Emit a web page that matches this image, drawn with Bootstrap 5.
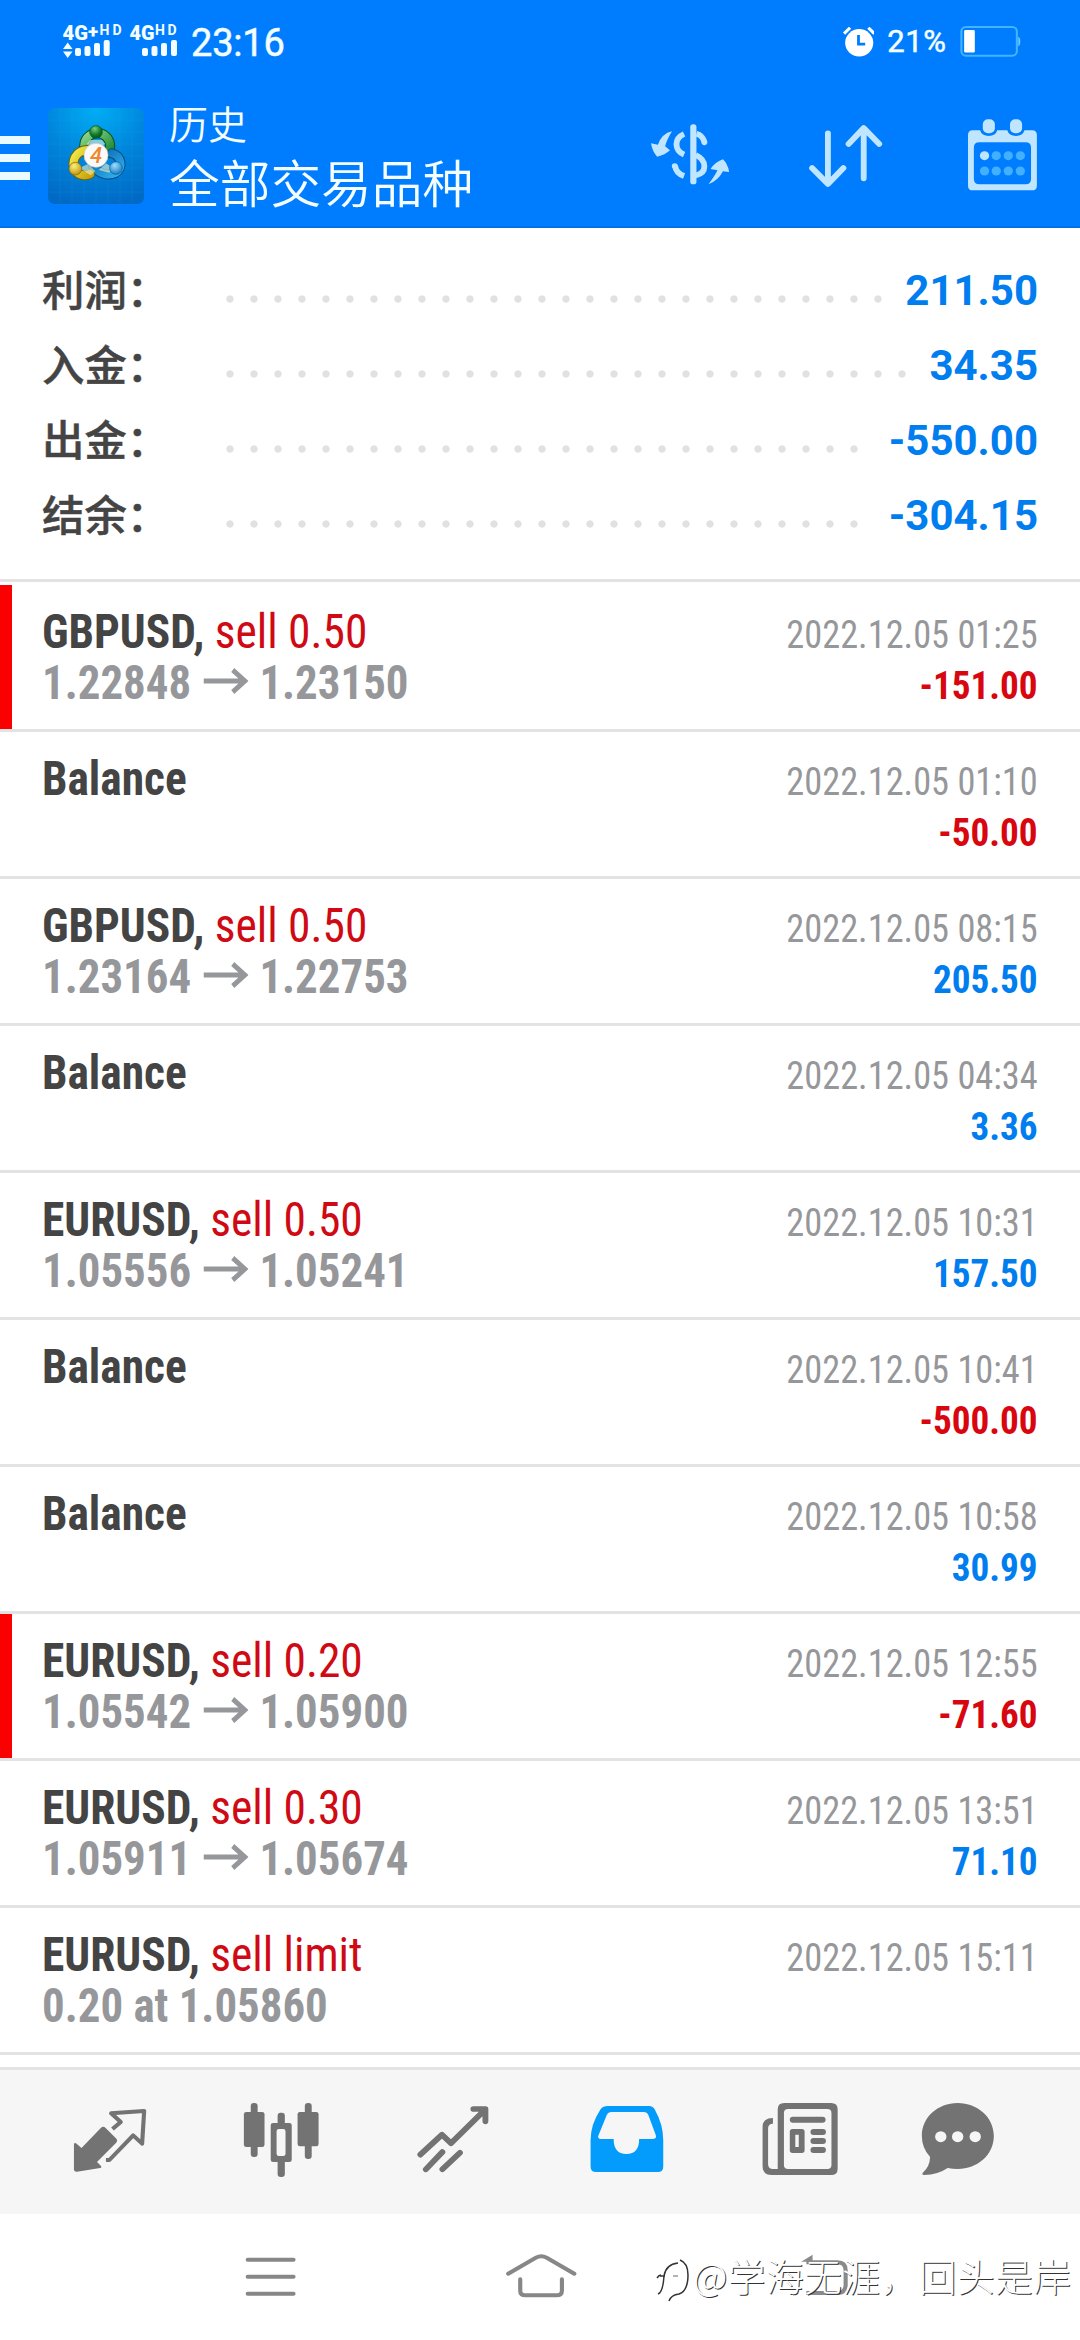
<!DOCTYPE html>
<html lang="zh-CN">
<head>
<meta charset="utf-8">
<meta name="viewport" content="width=device-width, initial-scale=1">
<title>历史</title>
<link href="https://cdn.jsdelivr.net/npm/bootstrap@5.3.0/dist/css/bootstrap.min.css" rel="stylesheet">
<style>
body{width:1080px;height:2340px;overflow:hidden;background:#fff;font-family:Roboto,"Noto Sans CJK SC",sans-serif;color:#444;position:relative}
svg{display:block;flex:none}
.topbar{height:228px;background:#007dff;border-bottom:2px solid #0070e4;color:#f4fdff}
.statusrow{height:84px;padding:0 59.2px 0 60px}
.clock{font-size:38px;line-height:42px;font-weight:400;margin:1px 0 0 10px;letter-spacing:-.2px;-webkit-text-stroke:.5px #f4fdff}
.battpct{width:85.8px;font-size:31px;line-height:36px;font-weight:400;letter-spacing:.6px;-webkit-text-stroke:.5px #f4fdff}
.approw{height:142px}
.app-burger{margin-top:48px}
.app-logo{margin:24px 0 0 18px}
.app-heading{margin:14px 0 0 25px}
.tool-a{margin:32.7px 79.9px 0 0}
.tool-b{margin:32.7px 85.4px 0 0}
.tool-c{margin:32.7px 43.1px 0 0}
.screen-name{font-family:"Noto Sans CJK SC",sans-serif;font-size:39px;line-height:48px;font-weight:350}
.filter-name{font-family:"Noto Sans CJK SC",sans-serif;font-size:50.7px;line-height:70px;font-weight:350}
.summary{height:354px;border-bottom:3px solid #e3e3e3;padding:25px 42px 0;margin-bottom:3px}
.sumrow{height:75px}
.sumlabel{width:184px;font-family:"Noto Sans CJK SC",sans-serif;font-size:42.4px;line-height:69px;height:75px;font-weight:500;-webkit-text-stroke:.5px #444}
.leader{height:8px;background:radial-gradient(circle at 4px 4px,#e1e1e1 3.3px,transparent 4px) 0 0/24px 8px repeat-x;margin-top:17px;width:calc(var(--n)*24px)}
.sumval{font-size:42px;line-height:77px;font-weight:700;color:#007dee}
.deal{height:147px;border-bottom:3px solid #e3e3e3;padding:0 42px;position:relative}
.deal.flag::before{content:"";position:absolute;left:0;top:0;width:12px;height:144px;background:#fa0000}
.lhs{padding-top:21px}
.rhs{padding-top:25px}
.cond{font-family:"Roboto Condensed",Roboto,sans-serif;white-space:nowrap}
.lhs .cond{font-size:48px;line-height:51px;font-weight:700;transform:scaleX(.946);transform-origin:0 0}
.side{color:#cf0a14;font-weight:400}
.lhs .price{color:#96979a;transform:scaleX(.935)}
.rhs .cond{font-size:39px;line-height:51px;transform:scaleX(.932);transform-origin:100% 0}
.when{color:#96979a}
.rhs .amount{font-weight:700;color:#d8060f;transform:scaleX(.953)}
.rhs .amount.up{color:#007dee}
.tabs{height:147px;margin-top:12px;border-top:3px solid #e3e3e3;background:#f6f6f6;padding:30px 0 0 24.1px}
.sysnav{height:126px;padding:39.3px 0 0 236.2px}
.nav-menu{margin-right:197.7px}
.nav-home{margin-right:216.9px}
.stamp{position:absolute;left:652px;top:2245px;color:#fff;font-family:"Noto Sans CJK SC",sans-serif;font-weight:300;font-size:37.7px;line-height:60px;letter-spacing:.5px;text-shadow:1px 1px 0 #333;white-space:nowrap}
</style>
</head>
<body>
<header class="topbar">
  <div class="statusrow d-flex align-items-center justify-content-between">
    <div class="d-flex align-items-center">
      <svg width="121" height="64" viewBox="60 10 121 64" fill="#f4fdff" font-family="Roboto,sans-serif" font-weight="900">
        <text x="62.500" y="39.500" font-size="19.500" textLength="25.500" lengthAdjust="spacingAndGlyphs">4G</text><text x="88" y="38" font-size="19">+</text><text x="99.500" y="35" font-size="14" textLength="22" font-weight="700">HD</text>
        <path d="M63 49l4.700-6.500L72.500 49zM63 51.500h9.500L67.700 58z"/>
        <g><rect x="75" y="48" width="6" height="8" rx="2"/><rect x="84.500" y="46" width="6" height="10" rx="2"/><rect x="94" y="43" width="6" height="13" rx="2"/><rect x="103.700" y="40" width="6" height="16" rx="2"/></g>
        <text x="129.500" y="39.500" font-size="19.500" textLength="25" lengthAdjust="spacingAndGlyphs">4G</text><text x="155" y="35" font-size="14" textLength="21.500" font-weight="700">HD</text>
        <g><rect x="142" y="48" width="6" height="8" rx="2"/><rect x="151.500" y="46" width="6" height="10" rx="2"/><rect x="161" y="43" width="6" height="13" rx="2"/><rect x="171" y="40" width="6" height="16" rx="2"/></g>
      </svg>
      <div class="clock">23:16</div>
    </div>
    <div class="d-flex align-items-center">
      <svg width="31" height="32" viewBox="878 82 88 93" preserveAspectRatio="none"><ellipse cx="924" cy="131" rx="40" ry="40" fill="#fff"/><path d="M881 104l17-17M967 104l-17-17" stroke="#fff" stroke-width="9"/><path d="M922 108v27h19" fill="none" stroke="#007dff" stroke-width="8"/></svg>
      <div class="battpct text-center">21%</div>
      <svg width="61" height="32" viewBox="1219 80 177 95" preserveAspectRatio="none"><rect x="1223" y="83" width="161" height="85" rx="13" fill="none" stroke="#43b4ff" stroke-width="6"/><rect x="1231" y="92" width="31" height="67" rx="4" fill="#fff"/><path d="M1388 112q6 2 6 14t-6 14z" fill="#6cc6ff"/></svg>
    </div>
  </div>
  <div class="approw d-flex align-items-start">
    <svg class="app-burger" width="30" height="52" viewBox="0 0 30 52" fill="#e9fbff"><path d="M0 4h30v8H0zM0 22h30v8H0zM0 40h30v8H0z"/></svg>
    <svg class="app-logo" width="96" height="96" viewBox="24 24 288 288">
      <defs>
        <radialGradient id="tile" cx=".5" cy="0" r="1.050"><stop offset="0" stop-color="#00aef6"/><stop offset=".5" stop-color="#0086dc"/><stop offset="1" stop-color="#0069c4"/></radialGradient>
        <linearGradient id="gr" x1="0" y1="0" x2="1" y2="1"><stop offset="0" stop-color="#8ed88c"/><stop offset="1" stop-color="#17852f"/></linearGradient>
        <linearGradient id="ye" x1="0" y1="0" x2="1" y2="1"><stop offset="0" stop-color="#f3ea4a"/><stop offset="1" stop-color="#c9a50c"/></linearGradient>
        <linearGradient id="bl" x1="0" y1="0" x2="1" y2="1"><stop offset="0" stop-color="#0a63ab"/><stop offset="1" stop-color="#2fb2ee"/></linearGradient>
        <radialGradient id="gb" cx=".4" cy=".25" r=".8"><stop offset="0" stop-color="#7ccf7c"/><stop offset=".6" stop-color="#0f7a2a"/><stop offset="1" stop-color="#064d18"/></radialGradient>
        <radialGradient id="yb" cx=".4" cy=".3" r=".8"><stop offset="0" stop-color="#fff07a"/><stop offset="1" stop-color="#b68a06"/></radialGradient>
        <radialGradient id="bb" cx=".4" cy=".3" r=".8"><stop offset="0" stop-color="#9be0ff"/><stop offset="1" stop-color="#0d6fb8"/></radialGradient>
      </defs>
      <rect x="24" y="24" width="288" height="288" rx="20" fill="url(#tile)"/>
      <path d="M60 24v288M96 24v288M132 24v288M168 24v288M204 24v288M240 24v288M276 24v288M24 60h288M24 96h288M24 132h288M24 168h288M24 204h288M24 240h288M24 276h288" stroke="#3bb6f5" stroke-opacity=".16" stroke-width="2"/>
      <g fill="none" stroke-linecap="round">
        <path d="M138 158a39 39 0 1 1 66 2" stroke="#07501f" stroke-width="30"/><path d="M138 158a39 39 0 1 1 66 2" stroke="url(#gr)" stroke-width="24"/>
        <path d="M216 160C246 168 250 205 226 219C200 232 170 216 158 196" stroke="#084a86" stroke-width="30"/><path d="M216 160C246 168 250 205 226 219C200 232 170 216 158 196" stroke="url(#bl)" stroke-width="24"/>
        <path d="M142 150C106 152 92 185 106 212C118 228 140 228 150 222" stroke="#6d6409" stroke-width="30"/><path d="M142 150C106 152 92 185 106 212C118 228 140 228 150 222" stroke="url(#ye)" stroke-width="24"/>
      </g>
      <path d="M140 132l10-12h36l10 12-28 14zM118 204l26-12 22 22-14 12zM176 210l22-20 18 12-8 16z" fill="#e2f4d5" opacity=".6"/>
      <circle cx="168" cy="96" r="19" fill="url(#gb)" stroke="#06501b" stroke-width="2"/><circle cx="106" cy="206" r="19" fill="url(#yb)" stroke="#806407" stroke-width="2"/><circle cx="228" cy="204" r="19" fill="url(#bb)" stroke="#0a5a9c" stroke-width="2"/>
      <circle cx="168" cy="166" r="36" fill="#fafafa" stroke="#c9c9b8" stroke-width="2"/>
      <text x="168" y="188" text-anchor="middle" font-family="Roboto,sans-serif" font-style="italic" font-weight="500" font-size="66" fill="#f0862e">4</text>
    </svg>
    <div class="app-heading flex-grow-1">
      <div class="screen-name">历史</div>
      <div class="filter-name">全部交易品种</div>
    </div>
    <svg class="tool-a" width="78.500" height="76.700" viewBox="322 350 228 230" preserveAspectRatio="none" fill="#c0e6ff">
      <path d="M383 393q-15 25-20 45l14 12q-14 14-37 19-14-15-18-40l20 4q12-34 41-40z"/>
      <path d="M489 552q20-28 26-42l-20-4q12-20 36-29 14 14 18 38l-18-2q-14 28-42 39z"/>
      <rect x="436" y="372" width="18" height="180" rx="8"/>
      <g fill="none" stroke="#c0e6ff" stroke-width="17"><path d="M418 401q-22 10-22 31t22 31M392 496q2 22 26 31"/><path d="M454 400q17 4 23 24" /><path d="M452 464q25 12 25 34t-25 27"/></g>
      <circle cx="391" cy="497" r="8.500"/><circle cx="477" cy="426" r="8.500"/>
    </svg>
    <svg class="tool-b" width="73.300" height="76.700" viewBox="782 350 213 230" preserveAspectRatio="none" fill="none" stroke="#c0e6ff" stroke-width="17" stroke-linecap="round" stroke-linejoin="round"><path d="M837 399v150M791 503l46 48 45-48M941 534V384M897 431l44-48 45 48"/></svg>
    <svg class="tool-c" width="68.900" height="76.700" viewBox="1243 350 200 230" preserveAspectRatio="none">
      <path fill="#c0e6ff" fill-rule="evenodd" d="M1257 390h21q5 17 25 17t25-17h29q5 17 25 17t25-17h22q14 0 14 14v152q0 14-14 14h-172q-14 0-14-14V404q0-14 14-14zM1276 426q-16 0-16 16v94q0 16 16 16h134q16 0 16-16v-94q0-16-16-16z"/>
      <rect x="1286" y="357" width="35" height="42" rx="15" fill="#c0e6ff"/><rect x="1365" y="357" width="35" height="42" rx="15" fill="#c0e6ff"/>
      <g fill="#40b0ff"><circle cx="1291" cy="466" r="13.500" fill="#c0e6ff"/><circle cx="1325" cy="466" r="13.500"/><circle cx="1360" cy="466" r="13.500"/><circle cx="1395" cy="466" r="13.500"/><circle cx="1291" cy="512" r="13.500"/><circle cx="1325" cy="512" r="13.500"/><circle cx="1360" cy="512" r="13.500"/><circle cx="1395" cy="512" r="13.500"/></g>
    </svg>
  </div>
</header>

<section class="summary">
  <div class="sumrow d-flex align-items-center"><div class="sumlabel">利润：</div><div class="leader" style="--n:28"></div><div class="sumval ms-auto">211.50</div></div>
  <div class="sumrow d-flex align-items-center"><div class="sumlabel">入金：</div><div class="leader" style="--n:29"></div><div class="sumval ms-auto">34.35</div></div>
  <div class="sumrow d-flex align-items-center"><div class="sumlabel">出金：</div><div class="leader" style="--n:27"></div><div class="sumval ms-auto">-550.00</div></div>
  <div class="sumrow d-flex align-items-center"><div class="sumlabel">结余：</div><div class="leader" style="--n:27"></div><div class="sumval ms-auto">-304.15</div></div>
</section>

<main id="deals"></main>

<nav class="tabs d-flex">
  <svg width="172.180" height="80" viewBox="70 180 500 240" preserveAspectRatio="none" fill="#737373"><path d="M215 314q0-8 6-4l16 14 56-60q7-7 14 0l30 31q7 7 0 14l-55 57 11 11q4 5-2 7l-67 11q-9 1-9-8z"/><path d="M327 267l24-21-28-26 96-7-6 98-26-25-69 74-10 0" fill="none" stroke="#737373" stroke-width="12" stroke-linejoin="round"/></svg>
  <svg width="172.180" height="80" viewBox="570 180 500 240" preserveAspectRatio="none" fill="#737373"><rect x="709" y="216" width="60" height="105" rx="7"/><rect x="729" y="189" width="20" height="162" rx="9"/><rect x="865" y="216" width="61" height="103" rx="7"/><rect x="886" y="189" width="20" height="168" rx="9"/><rect x="807" y="218" width="21" height="40" rx="9"/><rect x="807" y="350" width="21" height="61" rx="9"/><path fill-rule="evenodd" d="M794 249h47q7 0 7 7v103q0 7-7 7h-47q-7 0-7-7V256q0-7 7-7zM811 267q-7 0-7 7v67q0 7 7 7h12q7 0 7-7v-67q0-7-7-7z"/></svg>
  <svg width="172.180" height="80" viewBox="1070 180 500 240" preserveAspectRatio="none" fill="none" stroke="#737373" stroke-width="17" stroke-linecap="round" stroke-linejoin="round"><path d="M1222 344l63-60 26 26 98-100M1376 207h35v37M1238 388l48-52M1286 388l51-50"/></svg>
  <svg width="172.180" height="80" viewBox="1570 180 500 240" preserveAspectRatio="none"><path fill="#039cfd" fill-rule="evenodd" d="M1764 198h120q10 0 16 10 25 46 25 92v80q0 16-16 16h-179q-16 0-16-16v-80q0-46 29-92 7-10 21-10zM1775 216q-10 0-14 9l-24 61q-4 11 7 11h37q0 45 37 45t37-45h37q16 0 11-13l-21-58q-4-10-14-10z"/></svg>
  <svg width="172.180" height="80" viewBox="2070 180 500 240" preserveAspectRatio="none" fill="#737373"><path fill-rule="evenodd" d="M2277 189h136q19 0 19 19v178q0 19-19 19h-173q-26 0-26-26V260q0-26 30-26v17q-14 0-14 14v108q0 14 14 14h14V208q0-19 19-19zM2288 207q-12 0-12 12v156q0 12 12 12h114q12 0 12-12V219q0-12-12-12z"/><rect x="2293" y="230" width="104" height="18" rx="9"/><path fill-rule="evenodd" d="M2301 267h27q8 0 8 8v56q0 8-8 8h-27q-8 0-8-8v-56q0-8 8-8zM2309 284v37h10v-37z"/><rect x="2353" y="267" width="45" height="18" rx="9"/><rect x="2353" y="294" width="45" height="18" rx="9"/><rect x="2353" y="321" width="45" height="18" rx="9"/></svg>
  <svg width="172.180" height="80" viewBox="2570 180 500 240" preserveAspectRatio="none"><path fill="#737373" d="M2781 189c58 0 105 43 105 99s-47 99-105 99q-15 0-29-3-28 20-68 21-9-1-4-7 20-18 21-47-24-27-24-63c0-56 46-99 104-99z"/><g fill="#f6f6f6"><circle cx="2732" cy="290" r="16.500"/><circle cx="2781" cy="290" r="16.500"/><circle cx="2832" cy="290" r="16.500"/></g></svg>
</nav>
<div class="sysnav d-flex">
  <svg class="nav-menu" width="68.900" height="46.700" viewBox="686 640 200 140" preserveAspectRatio="none" stroke="#878787" stroke-width="12" stroke-linecap="round"><path d="M720 660h133M720 711h133M720 762h133"/></svg>
  <svg class="nav-home" width="75.800" height="46.700" viewBox="1460 640 220 140" preserveAspectRatio="none" stroke="#878787" stroke-width="12" stroke-linecap="round" fill="none"><path d="M1475 702l80-48q16-8 32 0l80 48M1510 719v34q0 14 16 14h89q16 0 16-14v-34"/></svg>
  <svg width="68.900" height="46.700" viewBox="2310 640 200 140" preserveAspectRatio="none" stroke="#8a8a8a" stroke-width="12" fill="none"><path d="M2343 668h90q24 0 24 24v44q0 24-24 24h-90"/><path d="M2328 666l33-21v21z" fill="#8a8a8a" stroke="none"/></svg>
</div>
<div class="stamp d-flex align-items-center"><svg width="41" height="60" viewBox="0 0 41 60" fill="none" stroke-width="1.500"><path d="M6 49q5-2 6-18 2-12 14-13M8 31h5M5 33q2-3 4-3" stroke="#333"/><path d="M28 15q8 3 8 15 0 16-9 19-8 1-10 7" stroke="#333"/><path d="M21 31h5" stroke="#999"/></svg><span>@学海无涯，回头是岸</span></div>
<script src="https://cdn.jsdelivr.net/npm/bootstrap@5.3.0/dist/js/bootstrap.bundle.min.js"></script>
<script>
const deals=[
["GBPUSD,","sell 0.50","1.22848","1.23150","01:25","-151.00",1],
["Balance","","","","01:10","-50.00"],
["GBPUSD,","sell 0.50","1.23164","1.22753","08:15","205.50"],
["Balance","","","","04:34","3.36"],
["EURUSD,","sell 0.50","1.05556","1.05241","10:31","157.50"],
["Balance","","","","10:41","-500.00"],
["Balance","","","","10:58","30.99"],
["EURUSD,","sell 0.20","1.05542","1.05900","12:55","-71.60",1],
["EURUSD,","sell 0.30","1.05911","1.05674","13:51","71.10"],
["EURUSD,","sell limit","0.20 at 1.05860","","15:11",""]];
const arrow='<svg class="d-inline-block mx-2 px-1" style="vertical-align:5px" width="73" height="26" viewBox="-1 0 49 26" fill="none" stroke="#96979a" stroke-width="5"><path d="M0 13h45M31 2l13 11-13 11"/></svg>'.replace('width="73"','width="57"');
document.getElementById('deals').innerHTML=deals.map(d=>`<div class="deal d-flex justify-content-between ${d[6]?'flag':''}">
<div class="lhs"><div class="cond">${d[0]} <span class="side">${d[1]}</span></div><div class="cond price">${d[2]}${d[3]?arrow+d[3]:''}</div></div>
<div class="rhs text-end"><div class="cond when">2022.12.05 ${d[4]}</div><div class="cond amount ${d[5][0]=='-'?'':'up'}">${d[5]}</div></div></div>`).join('');
</script>
</body>
</html>
